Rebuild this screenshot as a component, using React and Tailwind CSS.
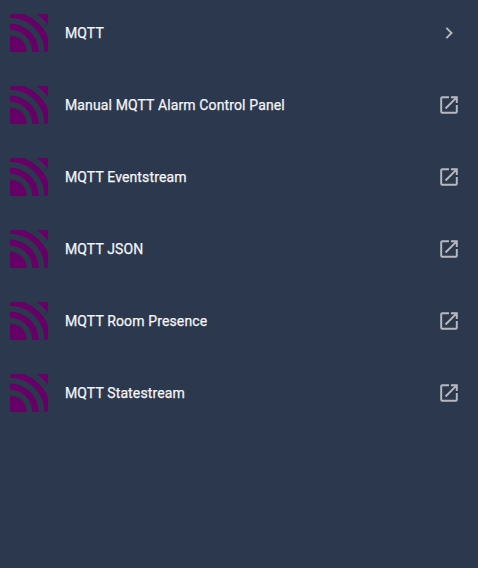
const items = ["MQTT", "Manual MQTT Alarm Control Panel", "MQTT Eventstream", "MQTT JSON", "MQTT Room Presence", "MQTT Statestream"];

function MqttLogo() {
  return (
    <svg className="size-[38px] shrink-0" viewBox="7 7 306 306" fill="#660066">
      <path d="M7.1 180.6v117.1c0 8.4 6.8 15.3 15.3 15.3H142C141 239.8 80.9 180.7 7.1 180.6z" />
      <path d="M7.1 84.1v49.8c99 .9 179.4 80.7 180.4 179.1h51.7C238.1 186.6 134.5 84.6 7.1 84.1z" />
      <path d="M312.9 297.6V193.5C278.1 107.2 207.3 38.9 119 7.1H22.4C14 7.1 7.1 13.9 7.1 22.4v15C159.9 38 284.3 161.4 285.3 313h12.3c8.5 0 15.3-6.9 15.3-15.4z" />
      <path d="M272.6 49.8c14.5 14.4 28.6 31.7 40.4 47.8V22.4c0-8.4-6.8-15.3-15.3-15.3h-77.3c18.2 12.6 36.5 27 52.2 42.7z" />
    </svg>
  );
}

export default function App() {
  return (
    <ul className="h-[568px] w-[478px] overflow-hidden bg-[#2c384e] font-['Roboto',sans-serif] text-sm tracking-[0.13px] text-[#f4f5f6] [-webkit-text-stroke:0.25px_#f4f5f6]">
      {items.map((name, i) => (
        <li key={name} className={i === 0 ? "flex h-[69px] items-center pr-[17px] pb-[3px] pl-[10px]" : "flex h-[72px] items-center pr-[17px] pl-[10px]"}>
          <MqttLogo />
          <span className="ml-[17px] flex-1">{name}</span>
          <svg className="size-6 shrink-0" viewBox="-0.3 -0.3 24.6 24.6" fill="#b5babf">
            <path d={i === 0 ? "M8.59 16.58 13.17 12 8.59 7.41 10 6l6 6-6 6-1.41-1.42z" : "M14 3v2h3.59l-9.83 9.83 1.41 1.41L19 6.41V10h2V3m-2 16H5V5h7V3H5a2 2 0 0 0-2 2v14a2 2 0 0 0 2 2h14a2 2 0 0 0 2-2v-7h-2v7z"} />
          </svg>
        </li>
      ))}
    </ul>
  );
}
